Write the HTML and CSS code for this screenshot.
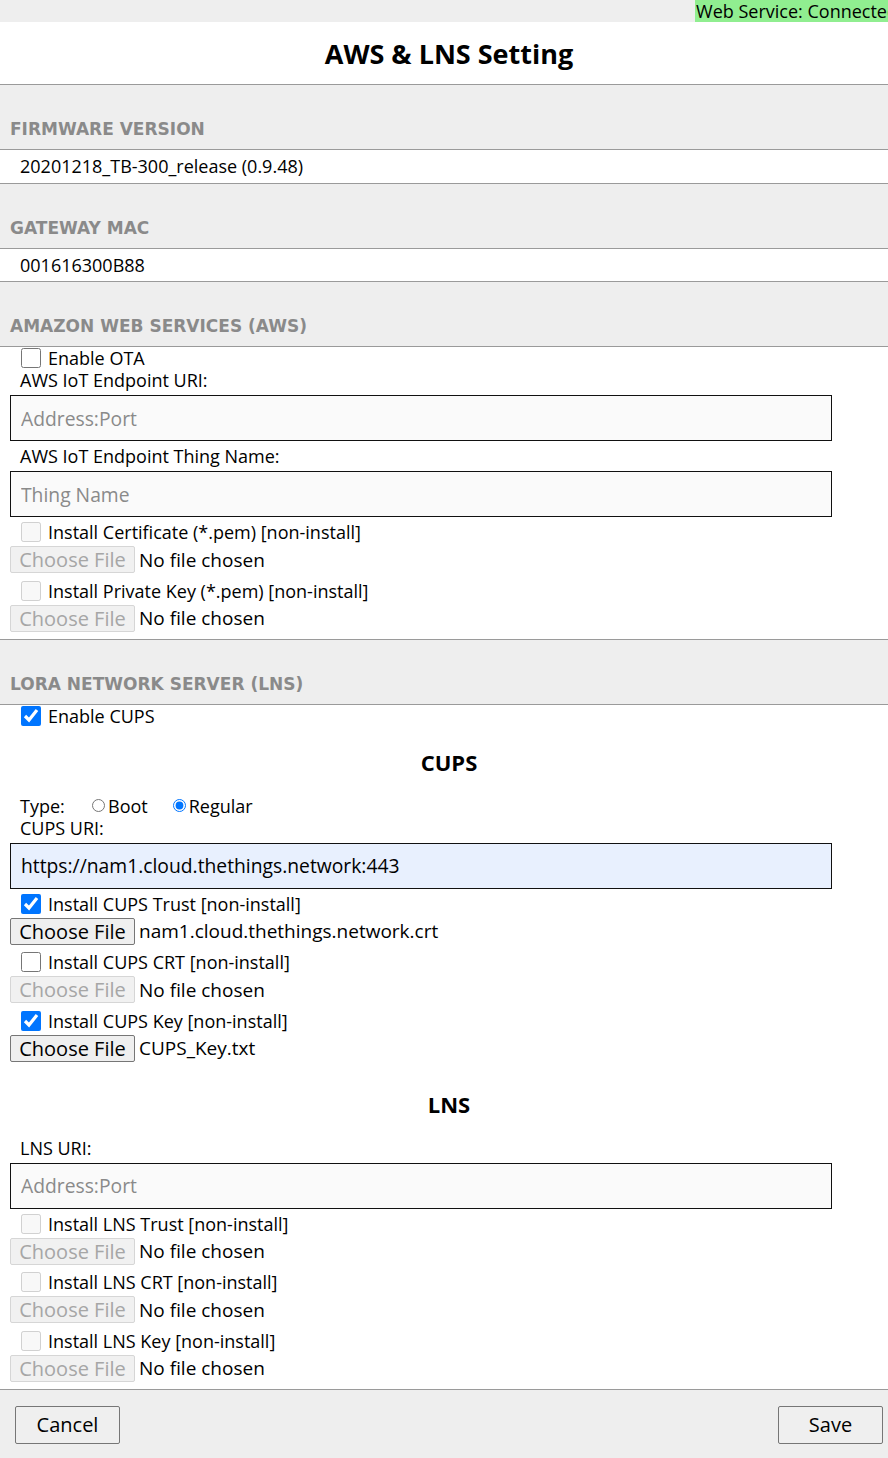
FILE: index.html
```html
<!DOCTYPE html>
<html>
<head>
<meta charset="utf-8">
<link rel="stylesheet" href="styles.css">
</head>
<body>
<div class="page">
<div class="topbar"><span class="status">Web Service: Connected</span></div>
<header class="title">AWS &amp; LNS Setting</header>

<div class="sec-head">FIRMWARE VERSION</div>
<div class="value">20201218_TB-300_release (0.9.48)</div>

<div class="sec-head">GATEWAY MAC</div>
<div class="value short">001616300B88</div>

<div class="sec-head">AMAZON WEB SERVICES (AWS)</div>
<div class="sec-body">
  <label class="cb-row"><input type="checkbox"><span>Enable OTA</span></label>
  <div class="label">AWS IoT Endpoint URI:</div>
  <input class="text" type="text" placeholder="Address:Port">
  <div class="label gap">AWS IoT Endpoint Thing Name:</div>
  <input class="text" type="text" placeholder="Thing Name">
  <label class="cb-row"><input type="checkbox" disabled><span>Install Certificate (*.pem) [non-install]</span></label>
  <div class="file-row"><button class="file-btn" disabled>Choose File</button><span class="file-name">No file chosen</span></div>
  <label class="cb-row next"><input type="checkbox" disabled><span>Install Private Key (*.pem) [non-install]</span></label>
  <div class="file-row"><button class="file-btn" disabled>Choose File</button><span class="file-name">No file chosen</span></div>
</div>

<div class="sec-head">LORA NETWORK SERVER (LNS)</div>
<div class="sec-body">
  <label class="cb-row"><input type="checkbox" checked><span>Enable CUPS</span></label>
  <h3 class="sub-head">CUPS</h3>
  <div class="type-row">
    <span class="type-label">Type:</span>
    <label class="radio"><input type="radio" name="type"><span>Boot</span></label>
    <label class="radio"><input type="radio" name="type" checked><span>Regular</span></label>
  </div>
  <div class="label">CUPS URI:</div>
  <input class="text filled" type="text" value="https://nam1.cloud.thethings.network:443">
  <label class="cb-row"><input type="checkbox" checked><span>Install CUPS Trust [non-install]</span></label>
  <div class="file-row"><button class="file-btn">Choose File</button><span class="file-name">nam1.cloud.thethings.network.crt</span></div>
  <label class="cb-row next"><input type="checkbox"><span>Install CUPS CRT [non-install]</span></label>
  <div class="file-row"><button class="file-btn" disabled>Choose File</button><span class="file-name">No file chosen</span></div>
  <label class="cb-row next"><input type="checkbox" checked><span>Install CUPS Key [non-install]</span></label>
  <div class="file-row"><button class="file-btn">Choose File</button><span class="file-name">CUPS_Key.txt</span></div>

  <h3 class="sub-head lns">LNS</h3>
  <div class="label uri">LNS URI:</div>
  <input class="text" type="text" placeholder="Address:Port">
  <label class="cb-row"><input type="checkbox" disabled><span>Install LNS Trust [non-install]</span></label>
  <div class="file-row"><button class="file-btn" disabled>Choose File</button><span class="file-name">No file chosen</span></div>
  <label class="cb-row next"><input type="checkbox" disabled><span>Install LNS CRT [non-install]</span></label>
  <div class="file-row"><button class="file-btn" disabled>Choose File</button><span class="file-name">No file chosen</span></div>
  <label class="cb-row next"><input type="checkbox" disabled><span>Install LNS Key [non-install]</span></label>
  <div class="file-row"><button class="file-btn" disabled>Choose File</button><span class="file-name">No file chosen</span></div>
</div>

<footer class="footer">
  <button class="act">Cancel</button>
  <button class="act">Save</button>
</footer>
</div>
</body>
</html>
```

FILE: styles.css
```css
* { box-sizing: border-box; }
html, body { margin: 0; padding: 0; }
body {
  width: 888px;
  overflow: hidden;
  font-family: "Open Sans", "Liberation Sans", sans-serif;
  font-size: 18px;
  color: #000;
  background: #fff;
}
.page {
  width: 898px;
}
.topbar {
  height: 22px;
  background: #eeeeee;
  display: flex;
  justify-content: flex-end;
  overflow: hidden;
}
.status {
  background: #90ee90;
  height: 22px;
  line-height: 22px;
  padding-left: 1px;
  font-size: 18px;
  white-space: nowrap;
}
.title {
  height: 63px;
  line-height: 64px;
  text-align: center;
  font-weight: bold;
  font-size: 27px;
  border-bottom: 1px solid #9a9a9a;
}
.sec-head {
  height: 65px;
  background: #eeeeee;
  border-bottom: 1px solid #9a9a9a;
  padding: 33px 0 0 10px;
  font-family: "DejaVu Sans", sans-serif;
  font-weight: bold;
  font-size: 17px;
  line-height: 22px;
  color: #8a8a8a;
}
.value {
  height: 34px;
  line-height: 33px;
  padding-left: 20px;
  border-bottom: 1px solid #9a9a9a;
}
.value.short { height: 33px; line-height: 32px; }
.sec-body {
  padding: 0 0 7px;
  border-bottom: 1px solid #9a9a9a;
}
.cb-row {
  display: flex;
  align-items: center;
  height: 22px;
  padding-left: 21px;
}
.cb-row.next { margin-top: 6.5px; }
.cb-row input {
  width: 20px;
  height: 20px;
  margin: 0 7px 0 0;
}
.label {
  height: 22px;
  line-height: 22px;
  padding-left: 20px;
}
.label.gap { margin-top: 4px; }
.text {
  display: block;
  width: 822px;
  height: 46px;
  margin: 4px 0 4px 10px;
  border: 1px solid #111;
  background: #fafafa;
  padding: 0 10px;
  font-family: "Open Sans", "Liberation Sans", sans-serif;
  font-size: 19.3px;
  color: #000;
  outline: none;
}
.text::placeholder { color: #8a8a8a; }
.text.filled { background: #e8f0fe; }
.file-row {
  display: flex;
  align-items: center;
  height: 27px;
  margin-top: 3px;
  padding-left: 10px;
}
.file-btn {
  width: 125px;
  height: 27px;
  padding: 0;
  margin: 0 4px 0 0;
  font-family: "Open Sans", "Liberation Sans", sans-serif;
  font-size: 20px;
  line-height: 25px;
  color: #000;
  background: #efefef;
  border: 1px solid #767676;
  border-radius: 2px;
}
.file-btn:disabled {
  color: #a6a6a6;
  background: #f1f1f1;
  border-color: #d6d6d6;
}
.file-name {
  font-size: 19px;
  white-space: nowrap;
}
.sub-head {
  margin: 23px 0 0;
  height: 24px;
  line-height: 24px;
  text-align: center;
  font-size: 22px;
  font-weight: bold;
}
.sub-head.lns { margin-top: 30px; }
.type-row {
  display: flex;
  align-items: center;
  height: 22px;
  margin-top: 21px;
  padding-left: 20px;
}
.type-label { width: 71px; }
.radio {
  display: flex;
  align-items: center;
  margin-right: 24px;
}
.radio input {
  width: 13px;
  height: 13px;
  margin: 0 3px 0 1px;
}
.label.uri { margin-top: 21px; }
.footer {
  height: 70px;
  background: #eeeeee;
  display: flex;
  justify-content: space-between;
  align-items: flex-start;
  padding: 16px 15px 0 15px;
}
.act {
  width: 105px;
  height: 38px;
  font-family: "Open Sans", "Liberation Sans", sans-serif;
  font-size: 20px;
  color: #000;
  background: #efefef;
  border: 1px solid #767676;
  border-radius: 2px;
}
```
